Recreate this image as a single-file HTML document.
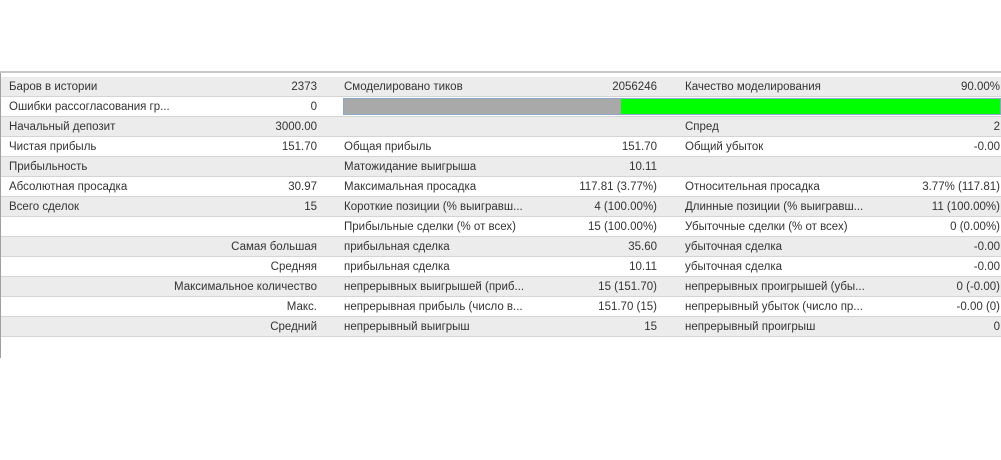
<!DOCTYPE html>
<html><head><meta charset="utf-8"><style>
body{margin:0;width:1001px;height:460px;background:#fff;overflow:hidden;font-family:"Liberation Sans","DejaVu Sans",sans-serif;font-size:11.5px;color:#333;position:relative}
.top{position:absolute;left:0;top:71px;width:1001px;height:2px;background:#c8c8c8}
.lb{position:absolute;left:0;top:73px;width:1px;height:285px;background:#a0a0a0}
.tbl{position:absolute;left:1px;top:77px;width:1000px}
.r{height:19px;border-bottom:1px solid #d4d4d4;position:relative;background:#fff}
.r.g{background:#ececec}
.r span{position:absolute;top:4px;white-space:nowrap}
.a{left:8px}.b{right:684px}.c{left:343px}.d{right:344px}.e{left:684px}.f{right:1px}
.bar{position:absolute;left:343px;top:98px;width:658px;height:17px;border:1px solid #8aa8c8;box-sizing:border-box;background:#00ff00}
.bar div{width:277px;height:100%;background:#a9a9a9}
</style></head><body>
<div class="top"></div><div class="lb"></div>
<div class="tbl">
<div class="r g"><span class="a">Баров в истории</span><span class="b">2373</span><span class="c">Смоделировано тиков</span><span class="d">2056246</span><span class="e">Качество моделирования</span><span class="f">90.00%</span></div>
<div class="r"><span class="a">Ошибки рассогласования гр...</span><span class="b">0</span></div>
<div class="r g"><span class="a">Начальный депозит</span><span class="b">3000.00</span><span class="e">Спред</span><span class="f">2</span></div>
<div class="r"><span class="a">Чистая прибыль</span><span class="b">151.70</span><span class="c">Общая прибыль</span><span class="d">151.70</span><span class="e">Общий убыток</span><span class="f">-0.00</span></div>
<div class="r g"><span class="a">Прибыльность</span><span class="c">Матожидание выигрыша</span><span class="d">10.11</span></div>
<div class="r"><span class="a">Абсолютная просадка</span><span class="b">30.97</span><span class="c">Максимальная просадка</span><span class="d">117.81 (3.77%)</span><span class="e">Относительная просадка</span><span class="f">3.77% (117.81)</span></div>
<div class="r g"><span class="a">Всего сделок</span><span class="b">15</span><span class="c">Короткие позиции (% выигравш...</span><span class="d">4 (100.00%)</span><span class="e">Длинные позиции (% выигравш...</span><span class="f">11 (100.00%)</span></div>
<div class="r"><span class="c">Прибыльные сделки (% от всех)</span><span class="d">15 (100.00%)</span><span class="e">Убыточные сделки (% от всех)</span><span class="f">0 (0.00%)</span></div>
<div class="r g"><span class="b">Самая большая</span><span class="c">прибыльная сделка</span><span class="d">35.60</span><span class="e">убыточная сделка</span><span class="f">-0.00</span></div>
<div class="r"><span class="b">Средняя</span><span class="c">прибыльная сделка</span><span class="d">10.11</span><span class="e">убыточная сделка</span><span class="f">-0.00</span></div>
<div class="r g"><span class="b">Максимальное количество</span><span class="c">непрерывных выигрышей (приб...</span><span class="d">15 (151.70)</span><span class="e">непрерывных проигрышей (убы...</span><span class="f">0 (-0.00)</span></div>
<div class="r"><span class="b">Макс.</span><span class="c">непрерывная прибыль (число в...</span><span class="d">151.70 (15)</span><span class="e">непрерывный убыток (число пр...</span><span class="f">-0.00 (0)</span></div>
<div class="r g"><span class="b">Средний</span><span class="c">непрерывный выигрыш</span><span class="d">15</span><span class="e">непрерывный проигрыш</span><span class="f">0</span></div>
</div>
<div class="bar"><div></div></div>
</body></html>
